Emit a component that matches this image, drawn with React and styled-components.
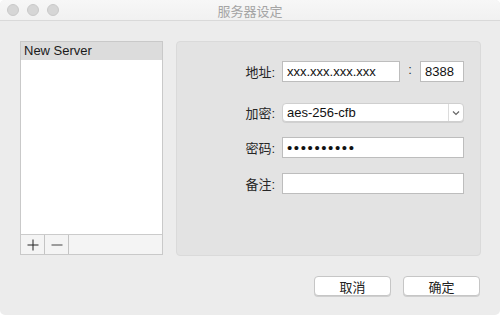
import React from "react";
import styled, { createGlobalStyle } from "styled-components";

const Global = createGlobalStyle`
    html, body {
        margin: 0;
        padding: 0;
        background: #ffffff;
    }
    * {
        box-sizing: border-box;
    }
`;

const Window = styled.div`
    width: 500px;
    height: 315px;
    background: #ececec;
    border-radius: 5px;
    overflow: hidden;
    font-family: "Liberation Sans", "Noto Sans CJK SC", sans-serif;
    font-size: 13px;
    color: #222;
    display: flex;
    flex-direction: column;
`;

const TitleBar = styled.div`
    height: 21px;
    display: flex;
    align-items: center;
    padding-left: 7px;
    background: linear-gradient(#f7f7f7, #f1f1f1);
    border-bottom: 1px solid #d9d9d9;
`;

const Lights = styled.div`
    display: flex;
    gap: 8px;
`;

const Light = styled.span`
    width: 12px;
    height: 12px;
    border-radius: 50%;
    background: #d6d6d6;
    border: 1px solid #c9c9c9;
`;

const Title = styled.div`
    flex: 1;
    text-align: center;
    margin-right: 59px;
    color: #a4a4a4;
    font-size: 13px;
`;

const Body = styled.div`
    flex: 1;
    padding: 20px 19px 0 20px;
    display: flex;
    flex-direction: column;
`;

const Main = styled.div`
    display: flex;
    gap: 13px;
    height: 215px;
`;

const List = styled.div`
    width: 143px;
    height: 214px;
    border: 1px solid #c9c9c9;
    background: #ffffff;
    display: flex;
    flex-direction: column;
`;

const ListItem = styled.div`
    height: 18px;
    line-height: 18px;
    padding-left: 3px;
    background: ${(p) => (p.selected ? "#dcdcdc" : "transparent")};
    color: #1a1a1a;
`;

const ListSpace = styled.div`
    flex: 1;
`;

const ListTools = styled.div`
    height: 20px;
    display: flex;
    border-top: 1px solid #cbcbcb;
    background: #f4f4f4;
`;

const ToolButton = styled.div`
    width: 24px;
    display: flex;
    align-items: center;
    justify-content: center;
    border-right: 1px solid #c4c4c4;
`;

const Panel = styled.div`
    flex: 1;
    height: 215px;
    background: #e3e3e3;
    border: 1px solid #dadada;
    border-radius: 4px;
    padding-top: 19px;
    display: flex;
    flex-direction: column;
`;

const Row = styled.div`
    display: flex;
    align-items: center;
    height: ${(p) => p.h || 21}px;
    margin-bottom: ${(p) => p.gap || 0}px;
`;

const Label = styled.div`
    width: 98px;
    text-align: right;
    margin-right: 7px;
    color: #262626;
`;

const Input = styled.input`
    width: ${(p) => p.w}px;
    height: 21px;
    border: 1px solid #bdbdbd;
    background: #fff;
    padding: 0 4px;
    font-family: inherit;
    font-size: ${(p) => (p.type === "password" ? "15px" : "13px")};
    color: #111;
    outline: none;
    letter-spacing: ${(p) => (p.type === "password" ? "1.6px" : "0")};
`;

const Colon = styled.div`
    width: 20px;
    text-align: center;
    color: #333;
    margin-top: -4px;
`;

const Select = styled.div`
    width: 182px;
    height: 19px;
    display: flex;
    background: #fff;
    border: 1px solid #cfcfcf;
    border-radius: 4px;
    box-shadow: 0 1px 0 #d0d0d0;
`;

const SelectValue = styled.div`
    flex: 1;
    padding-left: 4px;
    line-height: 17px;
    color: #111;
`;

const SelectArrow = styled.div`
    width: 15px;
    border-left: 1px solid #dcdcdc;
    display: flex;
    align-items: center;
    justify-content: center;
`;

const Footer = styled.div`
    display: flex;
    justify-content: flex-end;
    gap: 12px;
    margin-top: 20px;
    padding-right: 1px;
`;

const Button = styled.div`
    width: 77px;
    height: 20px;
    background: #fff;
    border: 1px solid #c6c6c6;
    border-radius: 4px;
    box-shadow: 0 1px 0 #cfcfcf;
    display: flex;
    align-items: center;
    justify-content: center;
    color: #222;
`;

function Plus() {
    return (
        <svg width="12" height="12" viewBox="0 0 12 12">
            <path d="M6 0.5V11.5M0.5 6H11.5" stroke="#222" strokeWidth="1" />
        </svg>
    );
}

function Minus() {
    return (
        <svg width="12" height="12" viewBox="0 0 12 12">
            <path d="M0.5 6H11.5" stroke="#444" strokeWidth="1" />
        </svg>
    );
}

function Chevron() {
    return (
        <svg width="8" height="6" viewBox="0 0 8 6">
            <path d="M1 1.5L4 4.5L7 1.5" fill="none" stroke="#666" strokeWidth="1.2" />
        </svg>
    );
}

export default function App() {
    return (
        <>
            <Global />
            <Window>
                <TitleBar>
                    <Lights>
                        <Light />
                        <Light />
                        <Light />
                    </Lights>
                    <Title>服务器设定</Title>
                </TitleBar>
                <Body>
                    <Main>
                        <List>
                            <ListItem selected>New Server</ListItem>
                            <ListSpace />
                            <ListTools>
                                <ToolButton>
                                    <Plus />
                                </ToolButton>
                                <ToolButton>
                                    <Minus />
                                </ToolButton>
                            </ListTools>
                        </List>
                        <Panel>
                            <Row gap={21}>
                                <Label>地址:</Label>
                                <Input w={118} defaultValue="xxx.xxx.xxx.xxx" />
                                <Colon>:</Colon>
                                <Input w={44} defaultValue="8388" />
                            </Row>
                            <Row h={19} gap={15}>
                                <Label>加密:</Label>
                                <Select>
                                    <SelectValue>aes-256-cfb</SelectValue>
                                    <SelectArrow>
                                        <Chevron />
                                    </SelectArrow>
                                </Select>
                            </Row>
                            <Row gap={15}>
                                <Label>密码:</Label>
                                <Input w={182} type="password" defaultValue="1234567890" />
                            </Row>
                            <Row>
                                <Label>备注:</Label>
                                <Input w={182} defaultValue="" />
                            </Row>
                        </Panel>
                    </Main>
                    <Footer>
                        <Button>取消</Button>
                        <Button>确定</Button>
                    </Footer>
                </Body>
            </Window>
        </>
    );
}
